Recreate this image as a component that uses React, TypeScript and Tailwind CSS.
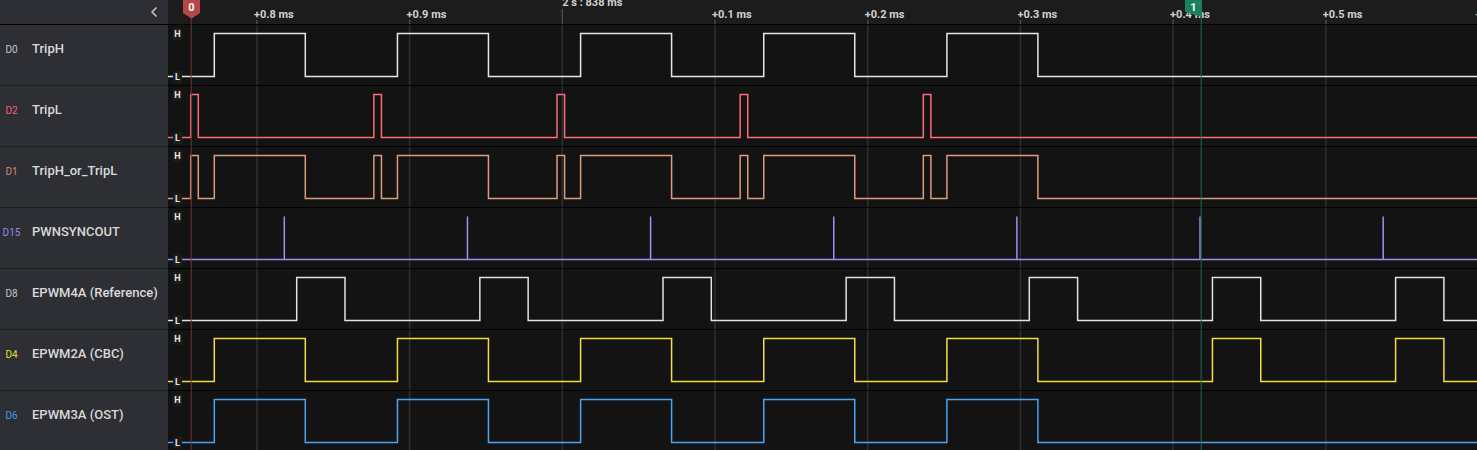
import { ChevronLeft } from 'lucide-react';

const PANEL_W = 168;
const CHART_W = 1477 - PANEL_W;
const PERIOD = 183.15;
const HI = 8.5;
const LO = 51.5;

// absolute page x -> chart x
const cx = (x: number) => x - PANEL_W;

const TICK0 = 256.9;
const TICK_STEP = 152.7;
const tickLabels = ['+0.8 ms', '+0.9 ms', '', '+0.1 ms', '+0.2 ms', '+0.3 ms', '+0.4 ms', '+0.5 ms', '+0.6 ms'];
const ticks = tickLabels.map((label, i) => ({ x: TICK0 + i * TICK_STEP, label }));

type Span = [number, number];

const repeat = (rise: number, fall: number, from: number, to: number): Span[] => {
  const out: Span[] = [];
  for (let k = from; k <= to; k++) out.push([rise + k * PERIOD, fall + k * PERIOD]);
  return out;
};

const tripH = repeat(214.3, 305.3, 0, 4);
const tripL = repeat(190.7, 198.3, 0, 4);
const reference = repeat(296.7, 345, 0, 6);

interface Channel {
  id: string;
  name: string;
  idColor: string;
  stroke: string;
  spans?: Span[];
  spikes?: number[];
}

const channels: Channel[] = [
  { id: 'D0', name: 'TripH', idColor: 'text-[#c4c4c4]', stroke: '#e6e6e6', spans: tripH },
  { id: 'D2', name: 'TripL', idColor: 'text-[#f2606c]', stroke: '#ff6b78', spans: tripL },
  {
    id: 'D1',
    name: 'TripH_or_TripL',
    idColor: 'text-[#d38c68]',
    stroke: '#dd9c7c',
    spans: [...tripL, ...tripH].sort((a, b) => a[0] - b[0]),
  },
  {
    id: 'D15',
    name: 'PWNSYNCOUT',
    idColor: 'text-[#9a86e2]',
    stroke: '#a68cf7',
    spikes: [0, 1, 2, 3, 4, 5, 6].map((k) => 284.3 + k * PERIOD),
  },
  { id: 'D8', name: 'EPWM4A (Reference)', idColor: 'text-[#c4c4c4]', stroke: '#e2e2e2', spans: reference },
  {
    id: 'D4',
    name: 'EPWM2A (CBC)',
    idColor: 'text-[#e9dc24]',
    stroke: '#f4e03a',
    spans: [...tripH, ...reference.slice(5)],
  },
  { id: 'D6', name: 'EPWM3A (OST)', idColor: 'text-[#3d9bea]', stroke: '#4ba4f2', spans: tripH },
];

const wavePath = (ch: Channel) => {
  let d = `M 0 ${LO}`;
  if (ch.spans) {
    for (const [r, f] of ch.spans) {
      d += ` H ${cx(r)} V ${HI} H ${cx(f)} V ${LO}`;
    }
  }
  if (ch.spikes) {
    for (const s of ch.spikes) {
      d += ` H ${cx(s)} V ${HI} V ${LO}`;
    }
  }
  return d + ` H ${CHART_W}`;
};

const Level = ({ label, top }: { label: string; top: string }) => (
  <span
    className={`absolute left-[5px] ${top} w-[9px] h-[12px] bg-[#1c1c1c] text-[#e6e6e6] text-[9px] font-bold leading-[12px] text-center`}
  >
    {label}
  </span>
);

const Row = ({ ch }: { ch: Channel }) => (
  <div className="flex h-[61px]">
    <div className="w-[168px] shrink-0 bg-[#2e2f34] border-b border-[#1d1e21] flex items-baseline pt-[16px]">
      <span className={`w-[23px] text-center text-[10px] leading-4 ${ch.idColor}`}>{ch.id}</span>
      <span className="ml-[9px] text-[13px] font-medium leading-4 text-[#d9d9d9]">{ch.name}</span>
    </div>
    <div className="relative flex-1 bg-[#131313] border-b border-black">
      <svg width={CHART_W} height={60} className="block">
        {ticks.map((t) => (
          <line key={t.x} x1={cx(t.x)} x2={cx(t.x)} y1={0} y2={60} stroke="#303030" strokeWidth={1.5} />
        ))}
        <path d={wavePath(ch)} fill="none" stroke={ch.stroke} strokeWidth={1.5} />
      </svg>
      <Level label="H" top="top-[3px]" />
      <Level label="L" top="top-[46px]" />
    </div>
  </div>
);

const Markers = () => (
  <svg width={CHART_W} height={450} className="absolute top-0 left-[168px] pointer-events-none">
    <line x1={cx(191.2)} x2={cx(191.2)} y1={18} y2={450} stroke="#6e3636" strokeWidth={1} />
    <polygon
      points={`${cx(183)},0 ${cx(200)},0 ${cx(200)},13 ${cx(191.5)},18.5 ${cx(183)},13`}
      fill="#b4474a"
    />
    <text x={cx(191.5)} y={11} textAnchor="middle" fill="#fff" fontSize={11} fontWeight={700} fontFamily="Roboto">
      0
    </text>
    <line x1={cx(1201.2)} x2={cx(1201.2)} y1={14} y2={450} stroke="#1f6c55" strokeWidth={1} />
    <polygon points={`${cx(1185)},0 ${cx(1202)},0 ${cx(1202)},17 ${cx(1185)},12`} fill="#19815f" />
    <text x={cx(1193.5)} y={11} textAnchor="middle" fill="#fff" fontSize={11} fontWeight={700} fontFamily="Roboto">
      1
    </text>
  </svg>
);

export default function App() {
  return (
    <div className="relative w-[1477px] h-[450px] overflow-hidden bg-[#131313] font-['Roboto',sans-serif]">
      {/* time axis */}
      <div className="flex h-[25px] border-b border-black">
        <div className="w-[168px] shrink-0 bg-[#2e2f34] flex items-center justify-end pr-[6px]">
          <ChevronLeft size={16} strokeWidth={2.5} className="text-[#c9c9c9]" />
        </div>
        <div className="relative flex-1 bg-[#1c1c1c] overflow-hidden">
          <svg width={CHART_W} height={24} className="absolute top-0 left-0">
            {ticks.map((t) => (
              <line
                key={t.x}
                x1={cx(t.x)}
                x2={cx(t.x)}
                y1={t.label ? 20 : 9}
                y2={24}
                stroke="#4a4a4a"
                strokeWidth={1.5}
              />
            ))}
          </svg>
          {ticks.map((t) =>
            t.label ? (
              <span
                key={t.label}
                className="absolute top-[8px] text-[11px] leading-[13px] font-bold text-[#d2d2d2] whitespace-nowrap"
                style={{ left: cx(t.x) - 3 }}
              >
                {t.label}
              </span>
            ) : (
              <span
                key="center"
                className="absolute top-[-4px] text-[11px] leading-[13px] font-bold text-[#d2d2d2] whitespace-nowrap"
                style={{ left: cx(t.x) }}
              >
                2 s : 838 ms
              </span>
            ),
          )}
        </div>
      </div>

      {channels.map((ch) => (
        <Row key={ch.id} ch={ch} />
      ))}

      <Markers />
    </div>
  );
}
